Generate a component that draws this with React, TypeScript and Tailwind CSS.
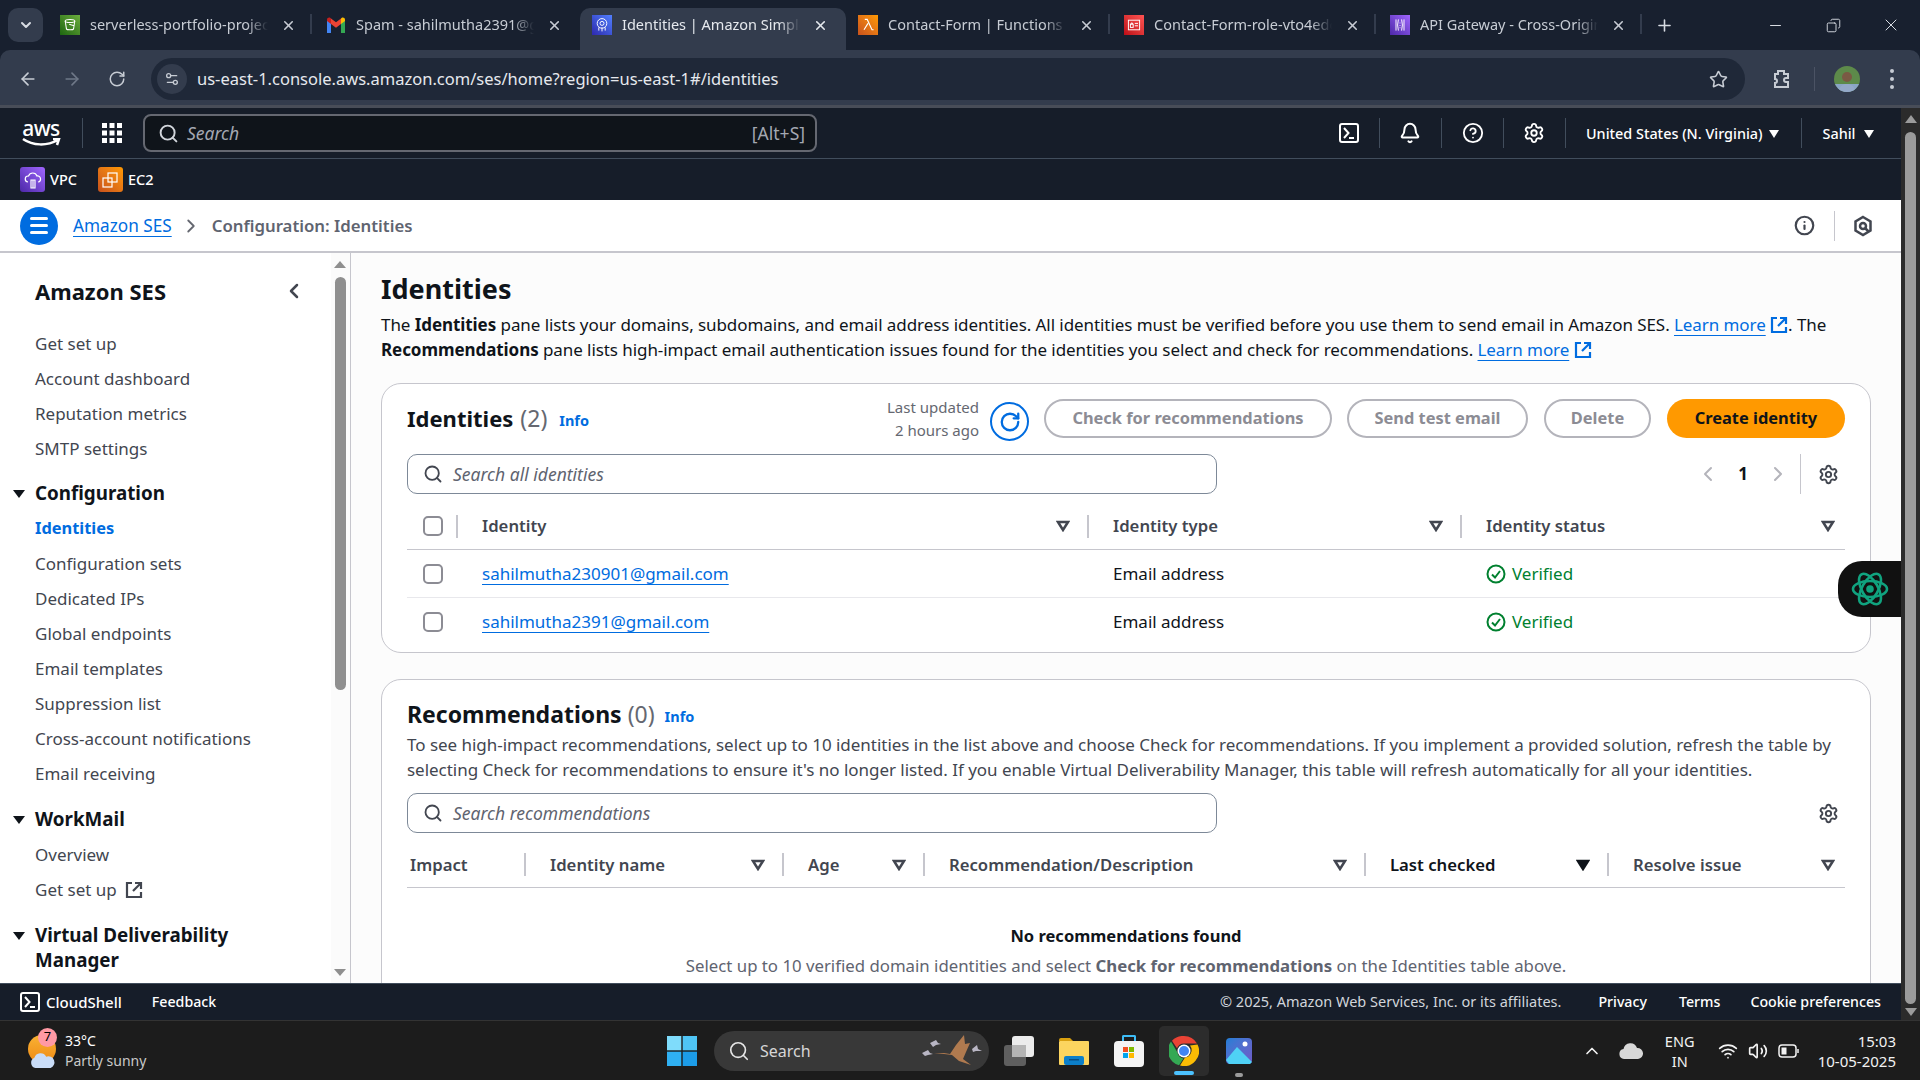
import type { ReactNode } from "react"
import { ArrowLeft, ArrowRight, Bell, ChevronDown, ChevronLeft, ChevronRight, ChevronUp, CircleHelp, Copy, Info, Minus, Plus, RotateCw, Search, Settings, Settings2, Star, Volume2, Wifi, X } from "lucide-react"

function S3Icon() {
  return (
    <div className="flex h-5 w-5 items-center justify-center bg-gradient-to-tr from-[#1b660f] to-[#6cae3e]">
      <svg viewBox="0 0 20 20" className="h-4 w-4" fill="none" stroke="white" strokeWidth="1.3">
        <ellipse cx="10" cy="5" rx="6" ry="2" />
        <path d="M4 5l1.6 10c.5 1.4 8.3 1.4 8.8 0L16 5M9 9l6 2" />
      </svg>
    </div>
  )
}

function GmailIcon() {
  return (
    <svg viewBox="0 0 20 16" className="h-4 w-5">
      <path d="M1 16V3l4 3v10z" fill="#4285f4" />
      <path d="M19 16V3l-4 3v10z" fill="#34a853" />
      <path d="M15 1.5V7l4-3V2.500C19 .8 17 0 15.8.8z" fill="#fbbc04" />
      <path d="M5 7V1.500l5 3.800 5-3.800V7l-5 3.800z" fill="#ea4335" />
      <path d="M1 2.500V4l4 3V1.500L4.200.8C3 0 1 .8 1 2.500z" fill="#c5221f" />
    </svg>
  )
}

function SesIcon() {
  return (
    <div className="flex h-5 w-5 items-center justify-center bg-gradient-to-tr from-[#2e27ad] to-[#527fff]">
      <svg viewBox="0 0 20 20" className="h-4 w-4" fill="none" stroke="white" strokeWidth="1.2">
        <circle cx="10" cy="8" r="6" />
        <circle cx="10" cy="8" r="2.5" />
        <path d="M6 13v4M10 13v5M14 13v4" />
      </svg>
    </div>
  )
}

function LambdaIcon() {
  return (
    <div className="flex h-5 w-5 items-center justify-center bg-gradient-to-tr from-[#c8511b] to-[#ff9900]">
      <svg viewBox="0 0 20 20" className="h-4 w-4" fill="none" stroke="white" strokeWidth="1.4">
        <path d="M6 3h3l6 13h2M10 8l-5 8" />
      </svg>
    </div>
  )
}

function IamIcon() {
  return (
    <div className="flex h-5 w-5 items-center justify-center bg-gradient-to-tr from-[#bd0816] to-[#ff5252]">
      <svg viewBox="0 0 20 20" className="h-4 w-4" fill="none" stroke="white" strokeWidth="1.2">
        <rect x="3" y="4" width="14" height="12" />
        <rect x="5.5" y="9" width="3.5" height="4" />
        <path d="M11 8h4M11 11h4M6.500 9V7.500h1.500V9" />
      </svg>
    </div>
  )
}

function ApiIcon() {
  return (
    <div className="flex h-5 w-5 items-center justify-center bg-gradient-to-tr from-[#4d27a8] to-[#a166ff]">
      <svg viewBox="0 0 20 20" className="h-4 w-4" fill="none" stroke="white" strokeWidth="1.2">
        <path d="M5 3v14M15 3v14M8 3l-1 7 1 7M12 3l1 7-1 7M10 7v1M10 10v1M10 13v1" />
      </svg>
    </div>
  )
}

const tabs = [
  { title: "serverless-portfolio-project", icon: <S3Icon /> },
  { title: "Spam - sahilmutha2391@gmail.com", icon: <GmailIcon /> },
  { title: "Identities | Amazon Simple Email Service", icon: <SesIcon />, active: true },
  { title: "Contact-Form | Functions | Lambda", icon: <LambdaIcon /> },
  { title: "Contact-Form-role-vto4edc | IAM", icon: <IamIcon /> },
  { title: "API Gateway - Cross-Origin Resource", icon: <ApiIcon /> },
]

function TabBar() {
  return (
    <div className="flex h-[50px] shrink-0 bg-[#18202f] text-[14.5px] text-[#c7ccd4]">
      <div className="flex w-[48px] items-center pl-2">
        <div className="flex h-[34px] w-[35px] items-center justify-center rounded-[10px] bg-[#333c4d]">
          <ChevronDown size={16} strokeWidth={3} className="text-[#d8dce3]" />
        </div>
      </div>
      {tabs.map((tab, i) => (
        <div
          key={tab.title}
          className={
            tab.active
              ? "relative mt-2 flex w-[266px] items-center rounded-t-[10px] bg-[#333c4d] pb-2 pl-3 text-[#e6e9ee]"
              : "relative mt-2 flex w-[266px] items-center pb-2 pl-3"
          }
        >
          <div className="flex w-[20px] shrink-0 items-center justify-center">{tab.icon}</div>
          <span className="ml-[10px] w-[178px] overflow-hidden whitespace-nowrap [mask-image:linear-gradient(90deg,black_88%,transparent)]">
            {tab.title}
          </span>
          <X size={15} strokeWidth={2.5} className="ml-[13px] shrink-0" />
          {!tab.active && i !== 1 && <div className="absolute right-[2px] top-[6px] h-[20px] w-[2px] bg-[#333c4d]" />}
        </div>
      ))}
      <div className="ml-[-3px] flex items-center pl-[14px]">
        <Plus size={19} strokeWidth={2} className="text-[#d8dce3]" />
      </div>
      <div className="ml-auto flex items-center pr-[19px] text-[#d8dce3]">
        <Minus size={17} strokeWidth={1.5} className="mr-[42px]" />
        <Copy size={15} strokeWidth={1.5} className="mr-[40px] -scale-x-100" />
        <X size={20} strokeWidth={1.2} />
      </div>
    </div>
  )
}

function Toolbar() {
  return (
    <div className="flex h-[58px] shrink-0 items-center rounded-t-[10px] border-b-[3px] border-[#484d58] bg-[#333c4d] pt-[3px] text-[#c7ccd4]">
      <ArrowLeft size={20} className="ml-[18px]" />
      <ArrowRight size={20} className="ml-[24px] text-[#6f7888]" />
      <RotateCw size={18} className="ml-[26px]" />
      <div className="ml-[25px] flex h-[42px] w-[1594px] items-center rounded-full bg-[#1f2838] pl-[6px]">
        <div className="flex h-[30px] w-[30px] items-center justify-center rounded-full bg-[#333c4d]">
          <Settings2 size={16} />
        </div>
        <span className="ml-[10px] text-[16.5px] text-[#e6e9ee]">
          us-east-1.console.aws.amazon.com/ses/home?region=us-east-1#/identities
        </span>
        <Star size={19} className="ml-auto mr-[17px]" />
      </div>
      <svg viewBox="0 0 24 24" className="ml-[24px] h-[24px] w-[24px]" fill="none" stroke="currentColor" strokeWidth="2">
        <path d="M9 4h6v3h4v4h-2a2 2 0 000 4h2v5H6v-4a2 2 0 000-4V7h3z" />
      </svg>
      <div className="ml-[21px] h-[24px] w-px bg-[#4b5364]" />
      <svg viewBox="0 0 26 26" className="ml-[19px] h-[26px] w-[26px]">
        <clipPath id="avatar">
          <circle cx="13" cy="13" r="13" />
        </clipPath>
        <g clipPath="url(#avatar)">
          <rect width="26" height="26" fill="#5d8a4a" />
          <rect y="18" width="26" height="8" fill="#8aa5c4" />
          <circle cx="13" cy="11" r="5" fill="#7a5a44" />
          <path d="M5 26c0-6 4-8 8-8s8 2 8 8z" fill="#94a9c9" />
        </g>
      </svg>
      <div className="ml-[30px] flex flex-col gap-[4px]">
        <span className="h-[4px] w-[4px] rounded-full bg-[#c7ccd4]" />
        <span className="h-[4px] w-[4px] rounded-full bg-[#c7ccd4]" />
        <span className="h-[4px] w-[4px] rounded-full bg-[#c7ccd4]" />
      </div>
    </div>
  )
}

function TerminalIcon({ size = 20 }: { size?: number }) {
  return (
    <svg viewBox="0 0 20 20" width={size} height={size} fill="none" stroke="white" strokeWidth="2">
      <rect x="1" y="1" width="18" height="18" rx="2" />
      <path d="M5 5l4.500 5L5 15M10 15h5" />
    </svg>
  )
}

function NavDivider() {
  return <div className="h-[30px] w-px bg-[#414d5c]" />
}

function Caret() {
  return <div className="h-0 w-0 border-x-[5px] border-t-[8px] border-x-transparent border-t-white" />
}

function TopNav() {
  return (
    <div className="flex h-[51px] shrink-0 items-center border-b border-[#414d5c] bg-[#161d29] text-white">
      <div className="ml-[21px] flex w-[40px] flex-col items-center">
        <span className="text-[21px] font-medium leading-[20px] tracking-tight">aws</span>
        <svg viewBox="0 0 40 10" className="h-[10px] w-[40px]" fill="none" stroke="white" strokeWidth="2.5">
          <path d="M2 1c10 7 24 7 35 1M32 1h6l-2 6" />
        </svg>
      </div>
      <div className="ml-[21px] h-[30px] w-px bg-[#414d5c]" />
      <svg viewBox="0 0 20 20" className="ml-[19px] h-[20px] w-[20px]" fill="white">
        {[0, 7.5, 15].map(y =>
          [0, 7.5, 15].map(x => <rect key={`${x}-${y}`} x={x} y={y} width="5" height="5" />),
        )}
      </svg>
      <div className="ml-[21px] flex h-[38px] w-[674px] items-center rounded-[8px] border-2 border-[#656871] bg-[#0f141a] pl-[13px] pr-[10px] text-[17.5px] text-[#a4a8b2]">
        <Search size={21} strokeWidth={2.2} className="text-[#d1d5db]" />
        <span className="ml-[8px] italic">Search</span>
        <span className="ml-auto">[Alt+S]</span>
      </div>
      <div className="ml-[522px]">
        <TerminalIcon />
      </div>
      <div className="ml-[20px]"><NavDivider /></div>
      <Bell size={22} strokeWidth={2.2} className="ml-[19px]" />
      <div className="ml-[20px]"><NavDivider /></div>
      <CircleHelp size={22} strokeWidth={2} className="ml-[20px]" />
      <div className="ml-[19px]"><NavDivider /></div>
      <Settings size={22} strokeWidth={2} className="ml-[19px]" />
      <div className="ml-[20px]"><NavDivider /></div>
      <span className="ml-[20px] mt-[2px] text-[14.4px] font-medium">United States (N. Virginia)</span>
      <div className="ml-[6px] mt-[2px]"><Caret /></div>
      <div className="ml-[22px]"><NavDivider /></div>
      <span className="ml-[21px] mt-[2px] text-[14.4px] font-medium">Sahil</span>
      <div className="ml-[8px] mt-[2px]"><Caret /></div>
    </div>
  )
}

function Favorites() {
  return (
    <div className="flex h-[41px] shrink-0 items-center bg-[#161d29] text-[14.5px] font-medium text-white">
      <div className="ml-[20px] flex h-[25px] w-[25px] items-center justify-center rounded-[3px] bg-gradient-to-tr from-[#4d27a8] to-[#a166ff]">
        <svg viewBox="0 0 20 20" className="h-[20px] w-[20px]" fill="none" stroke="white" strokeWidth="1.2">
          <path d="M5 12a3 3 0 01.500-6A4.500 4.500 0 0114 6a3 3 0 011 6M8 10h4v8H8zM10 10v8" />
        </svg>
      </div>
      <span className="ml-[5px]">VPC</span>
      <div className="ml-[21px] flex h-[25px] w-[25px] items-center justify-center rounded-[3px] bg-gradient-to-tr from-[#c8511b] to-[#ff9900]">
        <svg viewBox="0 0 20 20" className="h-[20px] w-[20px]" fill="none" stroke="white" strokeWidth="1.2">
          <rect x="8" y="3" width="9" height="9" />
          <rect x="3" y="8" width="9" height="9" />
        </svg>
      </div>
      <span className="ml-[5px]">EC2</span>
    </div>
  )
}

function Breadcrumbs() {
  return (
    <div className="flex h-[53px] shrink-0 items-center border-b-2 border-[#c6c6cd] bg-white text-[16.8px]">
      <div className="ml-[20px] flex h-[38px] w-[38px] flex-col items-center justify-center gap-[4px] rounded-full bg-[#006ce0]">
        <span className="h-[3px] w-[18px] rounded-full bg-white" />
        <span className="h-[3px] w-[18px] rounded-full bg-white" />
        <span className="h-[3px] w-[18px] rounded-full bg-white" />
      </div>
      <a className="ml-[15px] text-[17.2px] text-[#006ce0] underline underline-offset-4">Amazon SES</a>
      <ChevronRight size={22} className="ml-[8px] text-[#656871]" />
      <span className="ml-[10px] font-semibold text-[#5f6470]">Configuration: Identities</span>
      <Info size={21} strokeWidth={2.5} className="ml-auto text-[#424650]" />
      <div className="ml-[19px] h-[30px] w-px bg-[#c6c6cd]" />
      <svg viewBox="0 0 20 22" className="ml-[18px] mr-[28px] h-[22px] w-[20px]" fill="none" stroke="#424650" strokeWidth="2.5">
        <path d="M10 2l7.500 4.500v9L10 20l-7.500-4.500v-9z" />
        <circle cx="10" cy="11" r="3" />
        <path d="M12 13l4 4" />
      </svg>
    </div>
  )
}

function ExternalIcon({ size = 18, color = "#424650" }: { size?: number; color?: string }) {
  return (
    <svg viewBox="0 0 18 18" width={size} height={size} fill="none" stroke={color} strokeWidth="2.2" className="inline-block align-[-3px]">
      <path d="M7 2H2v14h14v-5M10 2h6v6M16 2L8 10" />
    </svg>
  )
}

function NavGroup({ title, items, spacing = "mt-[10px]" }: { title: string; items: ReactNode[]; spacing?: string }) {
  return (
    <div className={spacing}>
      <div className="relative py-[5px] text-[18.8px] font-bold leading-[25px] text-[#0f141a]">
        <span className="absolute left-[-22px] top-[14px] border-x-[6px] border-t-[8px] border-x-transparent border-t-[#0f141a]" />
        {title}
      </div>
      {items.map((item, i) => (
        <div key={i} className="flex h-[35px] items-center">
          {item}
        </div>
      ))}
    </div>
  )
}

function Sidebar() {
  return (
    <div className="flex w-[351px] shrink-0 border-r border-[#c6c6cd] bg-white">
      <div className="w-[331px] overflow-hidden pl-[35px] text-[17px] text-[#424650]">
        <div className="mb-[20px] mt-[23px] flex h-[30px] items-center justify-between pr-[25px]">
          <span className="text-[22px] font-bold text-[#0f141a]">Amazon SES</span>
          <ChevronLeft size={24} strokeWidth={2.5} className="text-[#424650]" />
        </div>
        {["Get set up", "Account dashboard", "Reputation metrics", "SMTP settings"].map(item => (
          <div key={item} className="flex h-[35px] items-center">{item}</div>
        ))}
        <NavGroup
          title="Configuration"
          items={[
            <span className="text-[16.4px] font-bold text-[#006ce0]">Identities</span>,
            "Configuration sets",
            "Dedicated IPs",
            "Global endpoints",
            "Email templates",
            "Suppression list",
            "Cross-account notifications",
            "Email receiving",
          ]}
        />
        <NavGroup
          title="WorkMail"
          spacing="mt-[11px]"
          items={[
            "Overview",
            <span className="flex items-center gap-[8px]">Get set up <ExternalIcon /></span>,
          ]}
        />
        <div className="relative mt-[16px] text-[18.8px] font-bold leading-[25px] text-[#0f141a]">
          <span className="absolute left-[-22px] top-[9px] border-x-[6px] border-t-[8px] border-x-transparent border-t-[#0f141a]" />
          Virtual Deliverability
          <br />
          Manager
        </div>
      </div>
      <div className="flex w-[19px] flex-col items-center bg-[#fbfbfb] pr-[1px] pt-[8px]">
        <span className="border-x-[6px] border-b-[7px] border-x-transparent border-b-[#8f8f8f]" />
        <div className="mt-[9px] h-[413px] w-[11px] rounded-full bg-[#8f8f8f]" />
        <span className="mb-[7px] mt-auto border-x-[6px] border-t-[7px] border-x-transparent border-t-[#8f8f8f]" />
      </div>
    </div>
  )
}

function FilterCaret({ solid }: { solid?: boolean }) {
  return (
    <svg viewBox="0 0 14 12" className="h-[12px] w-[14px] shrink-0" fill={solid ? "#0f141a" : "none"} stroke={solid ? "#0f141a" : "#424650"} strokeWidth="2.5">
      <path d="M2 2h10l-5 8z" />
    </svg>
  )
}

function HeaderCell({ label, solid, pr = "pr-[17px]" }: { label: string; solid?: boolean; pr?: string }) {
  return (
    <div className={`flex h-[23px] items-center justify-between border-l-2 border-[#c6c6cd] pl-[24px] ${pr}`}>
      <span className={solid ? "text-[#0f141a]" : ""}>{label}</span>
      <FilterCaret solid={solid} />
    </div>
  )
}

function SearchBox({ placeholder }: { placeholder: string }) {
  return (
    <div className="flex h-[40px] w-[810px] items-center rounded-[10px] border border-[#7d8998] bg-white pl-[15px] text-[17.5px] text-[#5f6470]">
      <Search size={20} strokeWidth={2.2} className="text-[#424650]" />
      <span className="ml-[10px] italic">{placeholder}</span>
    </div>
  )
}

function Checkbox() {
  return <div className="h-[20px] w-[20px] rounded-[5px] border-2 border-[#8c8c94] bg-white" />
}

function VerifiedStatus() {
  return (
    <span className="flex items-center gap-[6px] text-[#00802f]">
      <svg viewBox="0 0 20 20" className="h-[20px] w-[20px]" fill="none" stroke="#00802f" strokeWidth="2">
        <circle cx="10" cy="10" r="8.5" />
        <path d="M6 10.500l3 3 5-6.500" />
      </svg>
      Verified
    </span>
  )
}

function IdentityRow({ email, last }: { email: string; last?: boolean }) {
  return (
    <div className={last ? "grid h-[48px] grid-cols-[49px_631px_373px_1fr] items-center" : "grid h-[48px] grid-cols-[49px_631px_373px_1fr] items-center border-b border-[#e8e8ec]"}>
      <div className="pl-[16px]"><Checkbox /></div>
      <div className="pl-[26px]">
        <a className="text-[#006ce0] underline underline-offset-4">{email}</a>
      </div>
      <span className="pl-[26px] text-[#0f141a]">Email address</span>
      <div className="pl-[26px]"><VerifiedStatus /></div>
    </div>
  )
}

const outlineButton = "flex h-[39px] items-center justify-center rounded-full border-2 border-[#b4b4bb] text-[16.4px] font-bold text-[#8c8c94]"

function IdentitiesCard() {
  return (
    <div className="mt-[21px] shrink-0 rounded-[20px] border border-[#c6c6cd] bg-white px-[25px] pb-[6px] pt-[15px]">
      <div className="flex h-[39px] items-center">
        <h2 className="-mt-[1px] text-[22px] font-bold text-[#0f141a]">Identities</h2>
        <span className="-mt-[1px] ml-[7px] text-[23px] text-[#656871]">(2)</span>
        <a className="ml-[12px] mt-[4px] text-[14.5px] font-bold text-[#006ce0]">Info</a>
        <div className="ml-auto text-right text-[15px] leading-[23px] text-[#656871]">
          Last updated
          <br />
          2 hours ago
        </div>
        <div className="ml-[11px] mt-[6px] flex h-[39px] w-[39px] items-center justify-center rounded-full border-2 border-[#006ce0]">
          <RotateCw size={22} strokeWidth={2.5} className="text-[#006ce0]" />
        </div>
        <div className={`ml-[15px] w-[288px] ${outlineButton}`}>Check for recommendations</div>
        <div className={`ml-[15px] w-[181px] ${outlineButton}`}>Send test email</div>
        <div className={`ml-[16px] w-[107px] ${outlineButton}`}>Delete</div>
        <div className="ml-[16px] flex h-[39px] w-[178px] items-center justify-center rounded-full bg-[#ff9900] text-[16.4px] font-bold text-[#0f141a]">
          Create identity
        </div>
      </div>
      <div className="mt-[16px] flex items-center">
        <SearchBox placeholder="Search all identities" />
        <ChevronLeft size={24} className="ml-auto text-[#b4b4bb]" />
        <span className="ml-[18px] font-bold text-[#0f141a]">1</span>
        <ChevronRight size={24} className="ml-[18px] text-[#b4b4bb]" />
        <div className="ml-[10px] h-[40px] w-px bg-[#c6c6cd]" />
        <Settings size={21} strokeWidth={2.2} className="ml-[17px] mr-[6px] text-[#424650]" />
      </div>
      <div className="grid h-[56px] grid-cols-[49px_631px_373px_1fr] items-center border-b border-[#c6c6cd] pt-[9px] text-[16.7px] font-semibold text-[#424650]">
        <div className="pl-[16px]"><Checkbox /></div>
        <HeaderCell label="Identity" />
        <HeaderCell label="Identity type" />
        <HeaderCell label="Identity status" pr="pr-[10px]" />
      </div>
      <IdentityRow email="sahilmutha230901@gmail.com" />
      <IdentityRow email="sahilmutha2391@gmail.com" last />
    </div>
  )
}

function RecommendationsCard() {
  return (
    <div className="mt-[26px] shrink-0 rounded-t-[20px] border border-[#c6c6cd] bg-white px-[25px] pb-[40px] pt-[20px]">
      <div className="flex h-[30px] items-center">
        <h2 className="-mt-[2px] text-[23px] font-bold text-[#0f141a]">Recommendations</h2>
        <span className="-mt-[2px] ml-[6px] text-[23px] text-[#656871]">(0)</span>
        <a className="ml-[10px] mt-[4px] text-[14.5px] font-bold text-[#006ce0]">Info</a>
      </div>
      <p className="mt-[2px] whitespace-nowrap leading-[25px] tracking-[-0.03px] text-[#424650]">
        To see high-impact recommendations, select up to 10 identities in the list above and choose Check for recommendations. If you implement a provided solution, refresh the table by
        <br />
        selecting Check for recommendations to ensure it's no longer listed. If you enable Virtual Deliverability Manager, this table will refresh automatically for all your identities.
      </p>
      <div className="mt-[11px] flex items-center">
        <SearchBox placeholder="Search recommendations" />
        <Settings size={21} strokeWidth={2.2} className="ml-auto mr-[6px] text-[#424650]" />
      </div>
      <div className="grid h-[55px] grid-cols-[117px_258px_141px_441px_243px_1fr] items-center border-b border-[#c6c6cd] pt-[9px] text-[16.7px] font-semibold text-[#424650]">
        <span className="pl-[3px]">Impact</span>
        <HeaderCell label="Identity name" />
        <HeaderCell label="Age" />
        <HeaderCell label="Recommendation/Description" />
        <HeaderCell label="Last checked" solid />
        <HeaderCell label="Resolve issue" pr="pr-[10px]" />
      </div>
      <div className="mt-[35px] text-center text-[16.5px] font-bold leading-[25px] text-[#0f141a]">No recommendations found</div>
      <div className="mt-[5px] text-center text-[16.8px] leading-[25px] text-[#5f6470]">
        Select up to 10 verified domain identities and select <b>Check for recommendations</b> on the Identities table above.
      </div>
    </div>
  )
}

function MainContent() {
  return (
    <div className="flex min-w-0 flex-1 flex-col overflow-hidden bg-[#fcfcfc] pl-[30px] pr-[30px] pt-[18px] text-[17px]">
      <h1 className="h-[36px] shrink-0 text-[27px] font-bold leading-[36px] text-[#0f141a]">Identities</h1>
      <p className="mt-[6px] shrink-0 whitespace-nowrap leading-[24.5px] tracking-[-0.07px] text-[#0f141a]">
        The <b>Identities</b> pane lists your domains, subdomains, and email address identities. All identities must be verified before you use them to send email in Amazon SES.{" "}
        <a className="text-[#006ce0] underline underline-offset-4">Learn more</a> <ExternalIcon color="#006ce0" />. The
        <br />
        <b>Recommendations</b> pane lists high-impact email authentication issues found for the identities you select and check for recommendations.{" "}
        <a className="text-[#006ce0] underline underline-offset-4">Learn more</a> <ExternalIcon color="#006ce0" />
      </p>
      <IdentitiesCard />
      <RecommendationsCard />
    </div>
  )
}

function Footer() {
  return (
    <div className="flex h-[37px] shrink-0 items-center border-t border-[#414d5c] bg-[#161d29] text-[14.2px] text-white">
      <div className="ml-[20px]"><TerminalIcon /></div>
      <span className="ml-[6px] text-[15px] font-medium">CloudShell</span>
      <span className="ml-[30px] font-medium">Feedback</span>
      <span className="ml-auto text-[14.5px] text-[#d1d5db]">© 2025, Amazon Web Services, Inc. or its affiliates.</span>
      <span className="ml-[37px] font-medium">Privacy</span>
      <span className="ml-[32px] font-medium">Terms</span>
      <span className="ml-[30px] mr-[20px] font-medium">Cookie preferences</span>
    </div>
  )
}

function AssistantBubble() {
  return (
    <div className="absolute right-[19px] top-[561px] flex h-[56px] w-[63px] items-center justify-center rounded-l-[24px] bg-[#111]">
      <svg viewBox="0 0 40 40" className="h-[40px] w-[40px]" fill="none" stroke="#10a37f" strokeWidth="2.6">
        <ellipse cx="20" cy="20" rx="17" ry="8" />
        <ellipse cx="20" cy="20" rx="17" ry="8" transform="rotate(60 20 20)" />
        <ellipse cx="20" cy="20" rx="17" ry="8" transform="rotate(120 20 20)" />
        <circle cx="20" cy="20" r="2.5" fill="#10a37f" />
      </svg>
    </div>
  )
}

function PageScrollbar() {
  return (
    <div className="flex w-[19px] shrink-0 flex-col items-center bg-[#2b2b2b] pt-[7px]">
      <span className="border-x-[6px] border-b-[8px] border-x-transparent border-b-[#9b9b9b]" />
      <div className="mt-[9px] w-[11px] flex-1 rounded-full bg-[#9b9b9b]" />
      <span className="mb-[4px] mt-[4px] border-x-[6px] border-t-[8px] border-x-transparent border-t-[#9b9b9b]" />
    </div>
  )
}

function WeatherIcon() {
  return (
    <div className="relative h-[38px] w-[32px]">
      <div className="absolute left-[1px] top-[3px] h-[28px] w-[28px] rounded-full bg-gradient-to-b from-[#f9b233] to-[#ee8a12]" />
      <svg viewBox="0 0 26 14" className="absolute bottom-[1px] left-[2px] h-[17px] w-[28px]">
        <path d="M6 14a5 5 0 01-1-9.500 6 6 0 0111-1 5 5 0 014 10.500z" fill="#c9dcf7" />
      </svg>
      <div className="absolute -top-[4px] left-[11px] flex h-[19px] w-[19px] items-center justify-center rounded-full bg-[#ff99a4] text-[13px] text-black">7</div>
    </div>
  )
}

function Goose() {
  return (
    <svg viewBox="0 0 66 36" className="h-[36px] w-[66px]">
      <path d="M10 10l6-3 2 3 3 1-5 1-3 2zM2 20l6-3 2 3 3 1-5 1-3 1zM52 16l5-4 1 4 4 2-6 0-3 1z" fill="#b9b6c4" />
      <path d="M14 21l10-1 6 1 6-9 8-10 1 9 5-1-4 9-3 7 8 6-12-4-7-6-8-1z" fill="#b07a4f" />
    </svg>
  )
}

function Taskbar() {
  return (
    <div className="flex h-[60px] shrink-0 items-center border-t border-[#333] bg-[#1c1c1c] text-white">
      <div className="flex w-[667px] items-center pl-[27px]">
        <WeatherIcon />
        <div className="ml-[6px] text-[14px] leading-[20px]">
          <div>33°C</div>
          <div className="text-[#c9c9c9]">Partly sunny</div>
        </div>
      </div>
      <svg viewBox="0 0 30 30" className="h-[30px] w-[30px]">
        <rect width="14.3" height="14.3" fill="#7fdcfb" />
        <rect x="15.7" width="14.3" height="14.3" fill="#4fc5f5" />
        <rect y="15.7" width="14.3" height="14.3" fill="#2fb0f2" />
        <rect x="15.7" y="15.7" width="14.3" height="14.3" fill="#1c9ce8" />
      </svg>
      <div className="ml-[17px] flex h-[40px] w-[275px] items-center rounded-full bg-[#383838] pl-[14px] pr-[3px]">
        <Search size={22} strokeWidth={1.8} className="text-[#e6e6e6]" />
        <span className="ml-[10px] text-[16px] text-[#d6d6d6]">Search</span>
        <span className="ml-auto"><Goose /></span>
      </div>
      <div className="relative ml-[15px] h-[30px] w-[30px]">
        <div className="absolute bottom-0 left-0 h-[21px] w-[22px] rounded-[3px] bg-[#5f5f5f]" />
        <div className="absolute right-0 top-0 h-[21px] w-[22px] rounded-[3px] bg-[#ececec]" />
        <div className="absolute left-[8px] top-[9px] h-[12px] w-[14px] bg-[#b5b5b5]" />
      </div>
      <svg viewBox="0 0 30 28" className="ml-[25px] h-[28px] w-[30px]">
        <path d="M0 3a2 2 0 012-2h9l3 3h-14z" fill="#d9a00f" />
        <rect y="4" width="30" height="24" rx="1" fill="#fcd55f" />
        <rect x="5" y="19" width="20" height="9" rx="2" fill="#0c7fc9" />
        <rect x="10" y="22" width="10" height="1.5" fill="#064f85" />
      </svg>
      <div className="relative ml-[25px] h-[32px] w-[30px]">
        <div className="absolute left-[8px] top-0 h-[8px] w-[14px] rounded-t-[2px] border-2 border-b-0 border-[#3dbcf6]" />
        <div className="absolute bottom-0 h-[26px] w-[30px] rounded-[4px] bg-[#f4f4f4]" />
        <div className="absolute left-[9px] top-[12px] grid grid-cols-2 gap-px">
          <span className="h-[5px] w-[5px] bg-[#f25022]" />
          <span className="h-[5px] w-[5px] bg-[#7fba00]" />
          <span className="h-[5px] w-[5px] bg-[#00a4ef]" />
          <span className="h-[5px] w-[5px] bg-[#ffb900]" />
        </div>
      </div>
      <div className="relative ml-[15px] flex h-[50px] w-[50px] items-center justify-center rounded-[5px] bg-[#2c2c2c]">
        <svg viewBox="0 0 30 30" className="h-[30px] w-[30px]">
          <path d="M15 0a15 15 0 0113 7.500H15a7.500 7.500 0 00-7 4.700L3 4.700A15 15 0 0115 0z" fill="#ea4335" />
          <path d="M2 5.500l6.500 11a7.500 7.500 0 006 6L10 29.200A15 15 0 012 5.500z" fill="#34a853" />
          <path d="M28.500 8.500A15 15 0 0111 29.500l5-8a7.500 7.500 0 005-12z" fill="#fbbc04" />
          <circle cx="15" cy="15" r="6.5" fill="white" />
          <circle cx="15" cy="15" r="5" fill="#4285f4" />
        </svg>
        <div className="absolute bottom-[1px] h-[4px] w-[20px] rounded-full bg-[#4cc2ff]" />
      </div>
      <div className="relative ml-[17px] h-[26px] w-[26px]">
        <div className="h-[26px] w-[26px] rounded-[4px] bg-gradient-to-br from-[#1c7ed6] to-[#6d5ac7]" />
        <svg viewBox="0 0 26 26" className="absolute left-0 top-0 h-[26px] w-[26px]">
          <path d="M0 22l11-13 15 15-2 2H3z" fill="#4fd1f5" />
          <circle cx="19" cy="6" r="2.5" fill="white" />
        </svg>
        <div className="absolute bottom-[-13px] left-[9px] h-[4px] w-[8px] rounded-full bg-[#9b9b9b]" />
      </div>
      <div className="ml-auto flex items-center text-[#f2f2f2]">
        <ChevronUp size={20} strokeWidth={2} className="mr-[17px]" />
        <svg viewBox="0 0 24 16" className="mr-[17px] h-[16px] w-[24px]" fill="#d8d8d8">
          <path d="M5 16a5 5 0 01-.5-9.900A7 7 0 0118 5a5.500 5.500 0 011 11z" />
        </svg>
        <div className="w-[40px] text-center text-[14.5px] leading-[20px]">
          ENG
          <br />
          IN
        </div>
        <Wifi size={20} className="ml-[18px]" />
        <Volume2 size={20} className="ml-[10px]" />
        <svg viewBox="0 0 22 14" className="ml-[10px] h-[14px] w-[22px]" fill="none" stroke="#f2f2f2" strokeWidth="1.5">
          <rect x="1" y="1" width="17" height="12" rx="3" />
          <rect x="3.5" y="3.5" width="5" height="7" fill="#f2f2f2" stroke="none" />
          <path d="M20 5v4" />
        </svg>
        <div className="ml-[18px] mr-[24px] text-right text-[15px] leading-[20px]">
          15:03
          <br />
          10-05-2025
        </div>
      </div>
    </div>
  )
}

export default function App() {
  return (
    <div className="relative flex h-[1080px] w-[1920px] flex-col overflow-hidden bg-[#18202f] font-['Noto_Sans',sans-serif]">
      <TabBar />
      <Toolbar />
      <div className="flex min-h-0 flex-1">
        <div className="flex min-w-0 flex-1 flex-col">
          <TopNav />
          <Favorites />
          <Breadcrumbs />
          <div className="flex min-h-0 flex-1">
            <Sidebar />
            <MainContent />
          </div>
          <Footer />
        </div>
        <PageScrollbar />
      </div>
      <Taskbar />
      <AssistantBubble />
    </div>
  )
}
